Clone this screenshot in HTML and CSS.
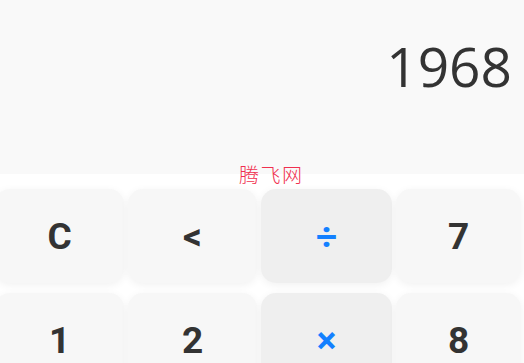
FILE: index.html
```html
<!DOCTYPE html>
<html lang="zh">
<head>
<meta charset="utf-8">
<title>Calculator</title>
<link rel="stylesheet" href="styles.css">
</head>
<body>
<div class="app">
  <div class="display"><span class="value">1968</span></div>
  <div class="watermark">腾飞网</div>
  <div class="keys">
    <button class="key">C</button>
    <button class="key">&lt;</button>
    <button class="key op">÷</button>
    <button class="key">7</button>
    <button class="key">1</button>
    <button class="key">2</button>
    <button class="key op">×</button>
    <button class="key">8</button>
  </div>
</div>
</body>
</html>
```
FILE: styles.css
```css
html, body {
  margin: 0;
  padding: 0;
  background: #ffffff;
  overflow: hidden;
  width: 524px;
  height: 363px;
}
.app {
  position: relative;
  width: 524px;
}
.display {
  height: 174px;
  box-sizing: border-box;
  background: #f9f9f9;
  padding: 28px 12px 0 0;
  text-align: right;
  font-family: "Open Sans", "Noto Sans", sans-serif;
  font-size: 55px;
  line-height: normal;
  color: #333333;
}
.watermark {
  position: absolute;
  top: 163px;
  left: 239px;
  font-family: "Noto Sans CJK SC", sans-serif;
  font-weight: 300;
  font-size: 20px;
  line-height: 24px;
  letter-spacing: 1.5px;
  color: #f0304f;
}
.keys {
  display: grid;
  grid-template-columns: 129px 129px 131px 125px;
  grid-auto-rows: 94px;
  column-gap: 4px;
  row-gap: 10px;
  margin: 15px 0 0 -5px;
}
.key {
  border: none;
  border-radius: 15px;
  background: #f7f7f7;
  box-shadow: 0 2px 8px rgba(0, 0, 0, 0.06);
  font-family: Roboto, "Liberation Sans", sans-serif;
  font-weight: 700;
  font-size: 37px;
  color: #333333;
  padding: 0;
  display: flex;
  align-items: center;
  justify-content: center;
}
.key.op {
  background: #efefef;
  color: #1380ff;
}
```
